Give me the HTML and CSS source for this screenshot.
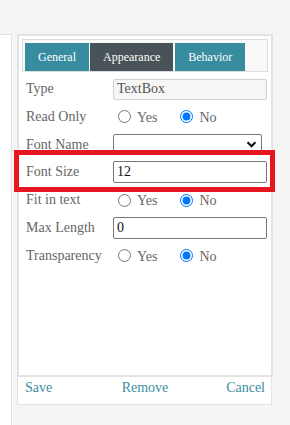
FILE: index.html
```html
<!DOCTYPE html>
<html lang="en">
<head>
<meta charset="utf-8">
<title>Properties</title>
<link rel="stylesheet" href="styles.css">
</head>
<body>
<div class="page">
  <aside class="side"></aside>
  <div class="editor">
    <div class="panel">
      <div class="tabs">
        <div class="tab">General</div>
        <div class="tab active">Appearance</div>
        <div class="tab">Behavior</div>
      </div>
      <div class="form">
        <div class="row">
          <span class="lbl">Type</span>
          <input class="field disabled" type="text" value="TextBox" readonly>
        </div>
        <div class="row">
          <span class="lbl">Read Only</span>
          <div class="radios">
            <label class="opt"><input type="radio" name="ro"><span>Yes</span></label>
            <label class="opt"><input type="radio" name="ro" checked><span>No</span></label>
          </div>
        </div>
        <div class="row">
          <span class="lbl">Font Name</span>
          <select class="select"><option></option></select>
        </div>
        <div class="row focus">
          <span class="lbl">Font Size</span>
          <input class="field" type="text" value="12">
          <div class="highlight"></div>
        </div>
        <div class="row">
          <span class="lbl">Fit in text</span>
          <div class="radios">
            <label class="opt"><input type="radio" name="fit"><span>Yes</span></label>
            <label class="opt"><input type="radio" name="fit" checked><span>No</span></label>
          </div>
        </div>
        <div class="row">
          <span class="lbl">Max Length</span>
          <input class="field" type="text" value="0">
        </div>
        <div class="row">
          <span class="lbl">Transparency</span>
          <div class="radios">
            <label class="opt"><input type="radio" name="tr"><span>Yes</span></label>
            <label class="opt"><input type="radio" name="tr" checked><span>No</span></label>
          </div>
        </div>
      </div>
    </div>
    <div class="footer">
      <a class="act left">Save</a>
      <a class="act">Remove</a>
      <a class="act right">Cancel</a>
    </div>
  </div>
</div>
</body>
</html>
```

FILE: styles.css
```css
html, body {
  margin: 0;
  padding: 0;
  background: #f5f5f5;
  font-family: "Liberation Serif", "Times New Roman", serif;
  font-size: 14px;
}

.page {
  display: flex;
  align-items: flex-start;
  padding-top: 34px;
  min-height: 425px;
  box-sizing: border-box;
}

.side {
  width: 11px;
  height: 391px;
  background: #fff;
  border-top: 1px solid #e2e2e2;
  border-right: 1px solid #e2e2e2;
}

.editor {
  margin-left: 5px;
  width: 256px;
}

.panel {
  height: 343px;
  box-sizing: border-box;
  border: 2px solid #e3e3e3;
  background: #fff;
  padding: 3px;
}

.tabs {
  display: flex;
  gap: 1px;
  border: 1px solid #dddddd;
  background: #f9f9f9;
  padding: 3px 2px 0 2px;
}

.tab {
  height: 28px;
  line-height: 28px;
  padding: 0 13px;
  background: #378c9f;
  color: #fff;
  font-size: 12px;
}

.tab.active {
  background: #485357;
  margin-right: 1px;
}

.form {
  display: flex;
  flex-direction: column;
  gap: 5.75px;
  margin: 6px -3px 0 -3px;
  padding: 0 4px 0 7px;
}

.row {
  position: relative;
  display: grid;
  grid-template-columns: 87px 1fr;
  align-items: center;
  height: 22px;
}

.lbl {
  color: #666;
  white-space: nowrap;
}

.field {
  box-sizing: border-box;
  width: 154px;
  height: 22px;
  margin: 0;
  padding: 0 3px;
  border: 1px solid #767676;
  border-radius: 2px;
  background: #fff;
  color: #111;
  font-family: "Liberation Serif", "Times New Roman", serif;
  font-size: 14px;
  outline: none;
}

.field.disabled {
  height: 21px;
  border-color: #d2d2d2;
  background: #f6f6f6;
  color: #555;
}

.select {
  box-sizing: border-box;
  width: 149px;
  height: 21px;
  margin: 0;
  border: 1px solid #767676;
  border-radius: 2px;
  background-color: #fff;
  -webkit-appearance: none;
  appearance: none;
  background-image: url("data:image/svg+xml,%3Csvg xmlns='http://www.w3.org/2000/svg' width='12' height='8' viewBox='0 0 12 8'%3E%3Cpath d='M1.5 1.5 L6 6 L10.5 1.5' fill='none' stroke='%23111' stroke-width='2.4'/%3E%3C/svg%3E");
  background-repeat: no-repeat;
  background-position: right 4px center;
  background-size: 11px 7px;
  font-family: "Liberation Serif", "Times New Roman", serif;
  font-size: 14px;
}

.radios {
  display: flex;
  align-items: center;
  padding-left: 5px;
}

.opt {
  display: flex;
  align-items: center;
  gap: 6px;
  color: #666;
}

.opt + .opt {
  margin-left: 23px;
}

.opt input {
  width: 13px;
  height: 13px;
  margin: 0;
}

.opt span {
  position: relative;
  top: 1px;
}

.highlight {
  position: absolute;
  top: -11px;
  bottom: -9px;
  left: -12px;
  right: -8px;
  border: 5px solid #e5161f;
  pointer-events: none;
}

.footer {
  box-sizing: border-box;
  width: 255px;
  height: 28px;
  border: 1px solid #e3e3e3;
  border-top: none;
  background: #fff;
  display: grid;
  grid-template-columns: 1fr auto 1fr;
  padding: 3px 6px 0 7px;
  line-height: 16px;
}

.act {
  color: #3a8da3;
  cursor: pointer;
}

.act.right {
  justify-self: end;
}
```
